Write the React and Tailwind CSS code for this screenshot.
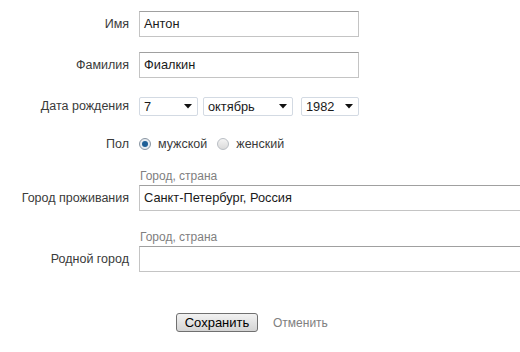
import React from "react"

const font = { fontFamily: '"Liberation Sans", Arial, sans-serif' }

function Label({ children }) {
  return <div className="w-[130px] shrink-0 pr-[1px] text-right text-[12.5px] text-[#3a3a3a]">{children}</div>
}

function TextBox({ value, wide }) {
  return (
    <div
      className={`flex h-[26px] shrink-0 items-center border border-[#c4c4c4] border-t-[#a0a0a0] bg-white pl-[4px] text-[12.8px] text-[#1a1a1a] ${
        wide ? "w-[420px]" : "w-[220px]"
      }`}
    >
      {value}
    </div>
  )
}

function Select({ value, width }) {
  return (
    <div
      className={`flex h-[19px] items-center justify-between rounded-[2px] border border-[#d3dae3] bg-white pl-[4px] pr-[5px] text-[12.8px] text-[#1a1a1a] ${width}`}
    >
      <span>{value}</span>
      <svg width="8" height="5" viewBox="0 0 8 5">
        <path d="M0 0h8L4 4.5z" fill="#111" />
      </svg>
    </div>
  )
}

function Radio({ checked, label }) {
  return (
    <div className="flex items-center gap-[7px]">
      <div
        className={`flex h-[12px] w-[12px] items-center justify-center rounded-full border ${
          checked ? "border-[#8a96a3] bg-[#e8edf2]" : "border-[#b9bec4] bg-gradient-to-b from-[#f4f4f4] to-[#dadada]"
        }`}
      >
        {checked && <div className="h-[6px] w-[6px] rounded-full bg-[#1f5f96]" />}
      </div>
      <span className="text-[12.5px] text-[#3a3a3a]">{label}</span>
    </div>
  )
}

export default function App() {
  return (
    <div className="h-[352px] w-[520px] overflow-hidden bg-white pt-[11px]" style={font}>
      <div className="flex items-center gap-[9px]">
        <Label>Имя</Label>
        <TextBox value="Антон" />
      </div>
      <div className="mt-[15px] flex items-center gap-[9px]">
        <Label>Фамилия</Label>
        <TextBox value="Фиалкин" />
      </div>
      <div className="mt-[19px] flex items-center gap-[9px]">
        <Label>Дата рождения</Label>
        <div className="flex">
          <Select value="7" width="w-[59px]" />
          <div className="ml-[5px]">
            <Select value="октябрь" width="w-[90px]" />
          </div>
          <div className="ml-[8px]">
            <Select value="1982" width="w-[58px]" />
          </div>
        </div>
      </div>
      <div className="mt-[19px] flex h-[18px] items-center gap-[9px]">
        <Label>Пол</Label>
        <div className="flex items-center gap-[10px]">
          <Radio checked label="мужской" />
          <Radio label="женский" />
        </div>
      </div>
      <div className="mt-[16px] pl-[140px] text-[12px] leading-[15px] text-[#808080]">Город, страна</div>
      <div className="mt-[1px] flex items-center gap-[9px]">
        <Label>Город проживания</Label>
        <TextBox value="Санкт-Петербург, Россия" wide />
      </div>
      <div className="mt-[19px] pl-[140px] text-[12px] leading-[15px] text-[#808080]">Город, страна</div>
      <div className="mt-[1px] flex items-center gap-[9px]">
        <Label>Родной город</Label>
        <TextBox value="" wide />
      </div>
      <div className="mt-[41px] flex items-center pl-[176px]">
        <button className="h-[19px] w-[82px] rounded-[3px] border border-[#707070] bg-gradient-to-b from-[#f2f2f2] to-[#d4d4d4] text-[13px] leading-[16px] text-black">
          Сохранить
        </button>
        <span className="ml-[15px] text-[12px] text-[#808080]">Отменить</span>
      </div>
    </div>
  )
}
